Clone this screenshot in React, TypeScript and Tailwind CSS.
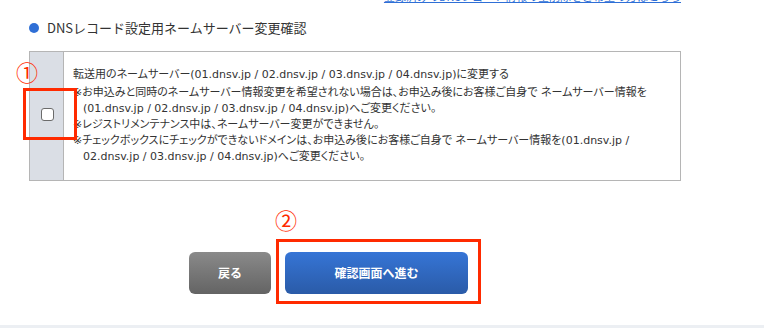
import React from "react";

const NOTES: string[][] = [
  [
    "※お申込みと同時のネームサーバー情報変更を希望されない場合は、お申込み後にお客様ご自身で ネームサーバー情報を",
    "(01.dnsv.jp / 02.dnsv.jp / 03.dnsv.jp / 04.dnsv.jp)へご変更ください。",
  ],
  ["※レジストリメンテナンス中は、ネームサーバー変更ができません。"],
  [
    "※チェックボックスにチェックができないドメインは、お申込み後にお客様ご自身で ネームサーバー情報を(01.dnsv.jp /",
    "02.dnsv.jp / 03.dnsv.jp / 04.dnsv.jp)へご変更ください。",
  ],
];

export default function App() {
  return (
    <div className="relative h-[328px] w-[764px] overflow-hidden bg-white text-[#333333] font-['Noto_Sans_CJK_JP',sans-serif]">
      <div className="flex w-[681px] flex-col pl-[29px]">
        {/* link cut off by the top edge */}
        <div className="-mt-[11px] h-[14px] text-right text-[11px] leading-[14px]">
          <a href="#" className="text-[#2f6fd6] underline">
            登録済みのDNSレコード情報の全削除をご希望の方はこちら
          </a>
        </div>

        {/* section title */}
        <div className="mt-[17px] flex h-[16px] items-center gap-[8px]">
          <span className="h-[10px] w-[10px] rounded-full bg-[#2f6fd6]" />
          <h2 className="text-[13px] leading-[16px] font-normal text-[#333333]">
            DNSレコード設定用ネームサーバー変更確認
          </h2>
        </div>

        {/* checkbox table */}
        <div className="mt-[15px] flex h-[130px] border border-[#b5b5b5]">
          <div className="flex w-[34px] shrink-0 items-center justify-center border-r border-[#b5b5b5] bg-[#dadee5]">
            <span className="-mt-[3px] ml-[1px] block h-[13px] w-[13px] rounded-[3px] border border-[#6b6b6b] bg-white" />
          </div>
          <div className="pl-[9px] pt-[15px] font-['DejaVu_Sans','Noto_Sans_CJK_JP',sans-serif] text-[11px] leading-[16px] whitespace-nowrap [font-feature-settings:'palt']">
            <p>転送用のネームサーバー(01.dnsv.jp / 02.dnsv.jp / 03.dnsv.jp / 04.dnsv.jp)に変更する</p>
            <div className="mt-[2px]">
              {NOTES.map((lines, i) => (
                <p key={i}>
                  {lines.map((l, j) => (
                    <span key={j} className={j > 0 ? "block pl-[10px]" : "block"}>
                      {l}
                    </span>
                  ))}
                </p>
              ))}
            </div>
          </div>
        </div>

        {/* buttons */}
        <div className="ml-[160px] mt-[71px] flex gap-[14px]">
          <button
            type="button"
            className="h-[42px] w-[82px] rounded-[6px] bg-gradient-to-b from-[#8a8a8a] to-[#646464] text-[12px] font-bold text-white"
          >
            戻る
          </button>
          <button
            type="button"
            className="h-[42px] w-[183px] rounded-[6px] bg-gradient-to-b from-[#3675d6] to-[#2a5ba8] text-[12px] font-bold text-white"
          >
            確認画面へ進む
          </button>
        </div>
      </div>

      {/* bottom strip */}
      <div className="absolute bottom-0 left-0 h-[3px] w-full bg-[#eceff3]" />

      {/* annotations */}
      <span className="absolute left-[16px] top-[58px] text-[22px] leading-[26px] text-[#ff2a00]">①</span>
      <div className="absolute left-[23px] top-[88px] h-[52px] w-[54px] border-[3px] border-[#ff2a00]" />
      <span className="absolute left-[275px] top-[206px] text-[22px] leading-[26px] text-[#ff2a00]">②</span>
      <div className="absolute left-[276px] top-[239px] h-[65px] w-[205px] border-[3px] border-[#ff2a00]" />
    </div>
  );
}
